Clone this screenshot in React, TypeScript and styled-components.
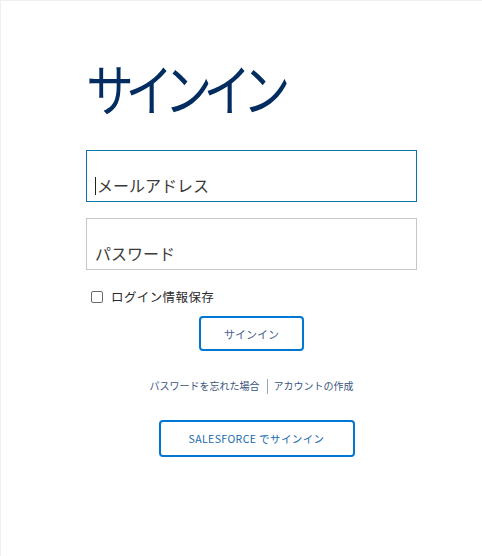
import React from "react";
import styled, { createGlobalStyle } from "styled-components";

const Global = createGlobalStyle`
  html, body { margin: 0; padding: 0; background: #fff; }
  body { font-family: "Noto Sans CJK JP", "Noto Sans", sans-serif; }
  * { box-sizing: border-box; }
`;

const Page = styled.div`
  width: 482px;
  height: 556px;
  border-top: 1px solid #efefef;
  border-left: 1px solid #efefef;
  background: #fff;
  overflow: hidden;
`;

const Column = styled.div`
  width: 331px;
  margin-left: 85px;
  padding-top: 50px;
  display: flex;
  flex-direction: column;
`;

const Title = styled.h1`
  margin: 0;
  font-size: 56px;
  font-weight: 400;
  line-height: 72px;
  color: #032d60;
  letter-spacing: -10px;
  transform: scaleX(0.85);
  transform-origin: 2px 50%;
  white-space: nowrap;
`;

const Field = styled.div<{ $focused?: boolean }>`
  height: 52px;
  border: 1px solid ${(p) => (p.$focused ? "#0b75a6" : "#c6c6c6")};
  display: flex;
  align-items: flex-end;
  padding: 0 0 4px 8px;
  font-size: 16px;
  line-height: 24px;
  color: #3a3a3a;
  margin-top: ${(p) => (p.$focused ? "27px" : "16px")};
`;

const Caret = styled.span`
  display: inline-block;
  width: 1px;
  height: 18px;
  margin-bottom: 2px;
  background: #222;
  margin-right: 1px;
`;

const RememberRow = styled.label`
  display: flex;
  align-items: center;
  gap: 8px;
  margin-top: 18px;
  margin-left: 5px;
  font-size: 12.5px;
  letter-spacing: 0.4px;
  color: #2b2b2b;
  line-height: 18px;
`;

const Box = styled.span`
  width: 12px;
  height: 12px;
  border: 1px solid #6b6b6b;
  border-radius: 2px;
  background: #fff;
`;

const Center = styled.div<{ $top: number; $shift?: number }>`
  display: flex;
  justify-content: center;
  margin-top: ${(p) => p.$top}px;
  margin-left: ${(p) => (p.$shift ?? 0) * 2}px;
`;

const OutlineButton = styled.button<{ $w: number; $h: number; $upper?: boolean }>`
  width: ${(p) => p.$w}px;
  height: ${(p) => p.$h}px;
  border: 2px solid #0176d3;
  border-radius: 4px;
  background: #fff;
  font-family: "Noto Sans CJK JP", "Noto Sans", sans-serif;
  font-size: ${(p) => (p.$upper ? "10.5px" : "11px")};
  color: ${(p) => (p.$upper ? "#1768ad" : "#4a6290")};
  letter-spacing: ${(p) => (p.$upper ? "0.4px" : "0")};
  padding: 0;
`;

const Links = styled.div`
  display: flex;
  align-items: center;
  font-size: 10px;
  color: #3a5580;
  line-height: 16px;
`;

const Sep = styled.span`
  width: 1px;
  height: 15px;
  background: #9aa6b6;
  margin: 0 6px 0 7px;
`;

export default function App() {
  return (
    <Page>
      <Global />
      <Column>
        <Title>サインイン</Title>
        <Field $focused>
          <Caret />
          メールアドレス
        </Field>
        <Field>パスワード</Field>
        <RememberRow>
          <Box />
          ログイン情報保存
        </RememberRow>
        <Center $top={10}>
          <OutlineButton $w={105} $h={35}>サインイン</OutlineButton>
        </Center>
        <Center $top={27}>
          <Links>
            <span>パスワードを忘れた場合</span>
            <Sep />
            <span>アカウントの作成</span>
          </Links>
        </Center>
        <Center $top={26} $shift={5}>
          <OutlineButton $w={196} $h={37} $upper>SALESFORCE でサインイン</OutlineButton>
        </Center>
      </Column>
    </Page>
  );
}
